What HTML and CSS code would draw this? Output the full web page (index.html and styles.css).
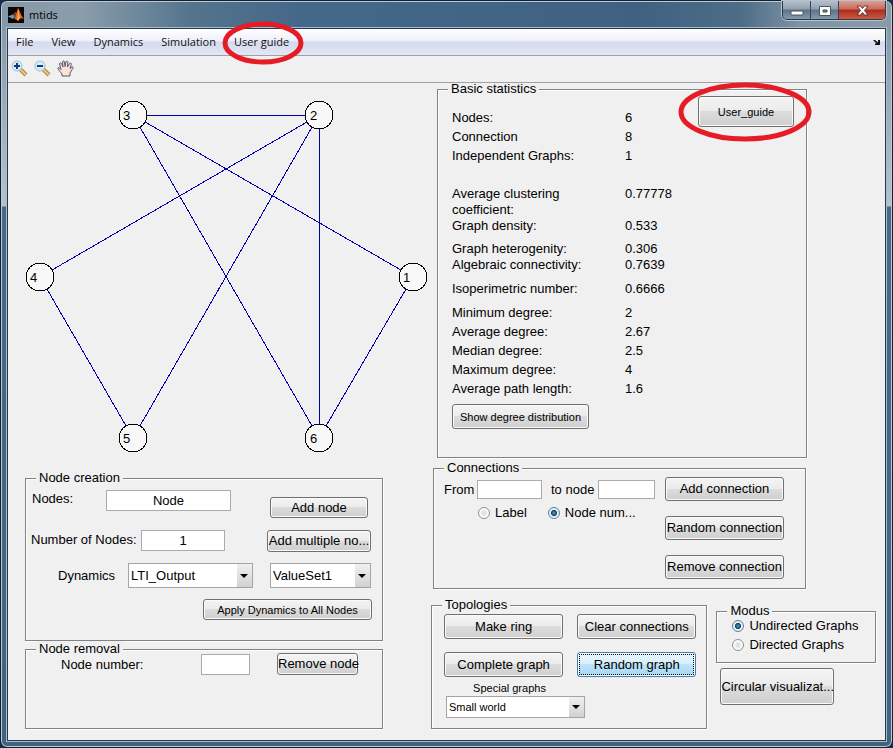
FILE: index.html
```html
<!DOCTYPE html>
<html lang="en">
<head>
<meta charset="utf-8">
<title>mtids</title>
<link rel="stylesheet" href="styles.css">
</head>
<body>
<div class="window">
  <header class="titlebar">
    <svg class="app-icon" viewBox="0 0 16 16" aria-hidden="true">
      <rect width="16" height="16" fill="#0b0806"/>
      <path d="M0 9.500l4.500-2L7 9l-2 3z" fill="#5b9cc4"/>
      <path d="M4.500 7.500L8 4.500l1 2.500-2 4-2 1 2-3z" fill="#8a3a20"/>
      <path d="M10 1c1.500 2 2.500 7 6 11-3-1.500-4-1-6 2-1-1-2-2-3.500-2C8 9 9 4 10 1z" fill="#e8642a"/>
      <path d="M10 1c1 3 1 7 2 9.500L10 14l-1-2c1-3 1-7 1-11z" fill="#f7b04c"/>
    </svg>
    <h1 class="app-title">mtids</h1>
    <div class="window-controls">
      <button class="wc wc-min" aria-label="Minimize"><svg viewBox="0 0 27 17"><rect x="8" y="9" width="12" height="4" rx="1" fill="#fff" stroke="#4a5560"/></svg></button>
      <button class="wc wc-max" aria-label="Maximize"><svg viewBox="0 0 27 17"><path d="M8.500 4.500h11v9h-11zM12 8v2h4V8z" fill="#fff" fill-rule="evenodd" stroke="#4a5560"/></svg></button>
      <button class="wc wc-close" aria-label="Close"><svg viewBox="0 0 46 17"><path d="M18 4h3.500l2 2.500L25.500 4H29l-3.500 4.500L29 13h-3.500l-2-2.500-2 2.500H18l3.500-4.500z" fill="#fff" stroke="#5a3a3a"/></svg></button>
    </div>
  </header>

  <div class="client">
    <nav class="menubar">
      <a href="#file">File</a>
      <a href="#view">View</a>
      <a href="#dynamics">Dynamics</a>
      <a href="#simulation">Simulation</a>
      <a href="#guide" class="marked">User guide
        <svg class="ring ring-menu" viewBox="0 0 82 44" aria-hidden="true"><ellipse cx="41" cy="22" rx="38" ry="19"/></svg>
      </a>
      <svg class="dock" viewBox="0 0 8 7" aria-hidden="true"><path d="M0 1h2l3 2.500V1h2v5H2V4.500h1.500L1 2z" fill="#111"/></svg>
    </nav>

    <div class="toolbar">
      <button class="tool" aria-label="Zoom in"><svg viewBox="0 0 17 17">
        <path d="M9 9l6 6" stroke="#a98446" stroke-width="4"/><path d="M9 9l6 6" stroke="#ecc878" stroke-width="2"/>
        <circle cx="6" cy="6" r="5" fill="#d5eefa" stroke="#9bbcd8"/><path d="M3 6h6M6 3v6" stroke="#143a7c" stroke-width="2"/></svg></button>
      <button class="tool" aria-label="Zoom out"><svg viewBox="0 0 17 17">
        <path d="M9 9l6 6" stroke="#a98446" stroke-width="4"/><path d="M9 9l6 6" stroke="#ecc878" stroke-width="2"/>
        <circle cx="6" cy="6" r="5" fill="#d5eefa" stroke="#9bbcd8"/><path d="M3 6h6" stroke="#143a7c" stroke-width="2"/></svg></button>
      <button class="tool" aria-label="Pan"><svg viewBox="0 0 17 17">
        <path d="M5 16v-2L1 9c-.6-1 .6-2 1.600-1L4 9.500 2.500 4c0-1.300 1.500-1.500 2-.3L6 7 5.500 2c.2-1.300 1.800-1.300 2 0L8 6.500 9 1.800c.4-1.100 1.900-.9 1.900.4L10.500 7 12.500 3.500c.7-1 2-.4 1.800.8L13 8.500 15 7c1-.5 1.500.4 1 1.200L13 13v3z" fill="#fbe3cf" stroke="#55557c" stroke-width="1"/></svg></button>
    </div>

    <main class="workspace">
      <section class="left">
        <svg class="graph" viewBox="0 0 423 387" role="img" aria-label="Graph">
          <g class="edges">
            <path d="M125 32L405 194M125 32L311 355M311 32L32 194M311 32L125 355M32 194L125 355M405 194L311 355"/>
            <rect x="125" y="32" width="186" height="1"/>
            <rect x="311" y="32" width="1" height="323"/>
          </g>
          <g class="nodes">
            <circle cx="405" cy="194" r="14"/><text x="395" y="199">1</text>
            <circle cx="311" cy="32" r="14"/><text x="302" y="37">2</text>
            <circle cx="125" cy="32" r="14"/><text x="115" y="37">3</text>
            <circle cx="32" cy="194" r="14"/><text x="22" y="199">4</text>
            <circle cx="125" cy="355" r="14"/><text x="115" y="360">5</text>
            <circle cx="311" cy="355" r="14"/><text x="302" y="360">6</text>
          </g>
        </svg>

        <fieldset class="panel creation">
          <legend>Node creation</legend>
          <div class="row row-first">
            <label for="nodes">Nodes:</label>
            <input id="nodes" class="w-name" type="text" value="Node">
            <button class="btn">Add node</button>
          </div>
          <div class="row row-count">
            <label for="count">Number of Nodes:</label>
            <input id="count" class="w-count" type="text" value="1">
            <button class="btn">Add multiple no...</button>
          </div>
          <div class="row row-dynamics">
            <label for="dyn">Dynamics</label>
            <span class="drop w-name"><select id="dyn"><option>LTI_Output</option></select></span>
            <span class="drop w-set"><select aria-label="Value set"><option>ValueSet1</option></select></span>
          </div>
          <div class="row row-apply"><button class="btn small">Apply Dynamics to All Nodes</button></div>
        </fieldset>

        <fieldset class="panel removal">
          <legend>Node removal</legend>
          <div class="row row-removal">
            <label for="rem">Node number:</label>
            <input id="rem" type="text">
            <button class="btn">Remove node</button>
          </div>
        </fieldset>
      </section>

      <section class="right">
        <fieldset class="panel stats">
          <legend>Basic statistics</legend>
          <div class="stats-body">
            <dl>
              <div><dt>Nodes:</dt><dd>6</dd></div>
              <div><dt>Connection</dt><dd>8</dd></div>
              <div class="gap-l"><dt>Independent Graphs:</dt><dd>1</dd></div>
              <div class="gap-none"><dt>Average clustering coefficient:</dt><dd>0.77778</dd></div>
              <div class="gap-s"><dt>Graph density:</dt><dd>0.533</dd></div>
              <div class="gap-none"><dt>Graph heterogenity:</dt><dd>0.306</dd></div>
              <div class="gap-m"><dt>Algebraic connectivity:</dt><dd>0.7639</dd></div>
              <div class="gap-m"><dt>Isoperimetric number:</dt><dd>0.6666</dd></div>
              <div><dt>Minimum degree:</dt><dd>2</dd></div>
              <div><dt>Average degree:</dt><dd>2.67</dd></div>
              <div><dt>Median degree:</dt><dd>2.5</dd></div>
              <div><dt>Maximum degree:</dt><dd>4</dd></div>
              <div><dt>Average path length:</dt><dd>1.6</dd></div>
            </dl>
            <div class="marked guide">
              <button class="btn small">User_guide</button>
              <svg class="ring ring-guide" viewBox="0 0 134 60" aria-hidden="true"><ellipse cx="67" cy="30" rx="64" ry="27"/></svg>
            </div>
          </div>
          <button class="btn small distribution">Show degree distribution</button>
        </fieldset>

        <fieldset class="panel connections">
          <legend>Connections</legend>
          <div class="conn-body">
            <div class="conn-form">
              <div class="conn-line">
                <label for="from">From</label><input id="from" class="w-from" type="text">
                <label for="to" class="to">to node</label><input id="to" class="w-to" type="text">
              </div>
              <div class="conn-kind">
                <label><input type="radio" name="kind">Label</label>
                <label><input type="radio" name="kind" checked>Node num...</label>
              </div>
            </div>
            <div class="conn-actions">
              <button class="btn">Add connection</button>
              <button class="btn">Random connection</button>
              <button class="btn">Remove connection</button>
            </div>
          </div>
        </fieldset>

        <div class="bottom">
          <fieldset class="panel topologies">
            <legend>Topologies</legend>
            <div class="topo-grid">
              <button class="btn">Make ring</button>
              <button class="btn">Clear connections</button>
              <button class="btn">Complete graph</button>
              <button class="btn focused">Random graph</button>
            </div>
            <div class="special small">
              <label for="special">Special graphs</label>
              <span class="drop"><select id="special"><option>Small world</option></select></span>
            </div>
          </fieldset>
          <div class="side">
            <fieldset class="panel modus">
              <legend>Modus</legend>
              <label><input type="radio" name="modus" checked>Undirected Graphs</label>
              <label><input type="radio" name="modus">Directed Graphs</label>
            </fieldset>
            <button class="btn circular">Circular visualizat...</button>
          </div>
        </div>
      </section>
    </main>
  </div>
</div>
</body>
</html>
```

FILE: styles.css
```css
* { box-sizing: border-box; }

body {
  margin: 0;
  background: #17304d;
  color: #000;
  font: 13px/16px "Liberation Sans", Arial, sans-serif;
}

button, input, select { font: inherit; color: inherit; margin: 0; }

/* Window frame */
.window {
  display: flex;
  flex-direction: column;
  min-height: 100vh;
  padding: 0 6px 6px;
  border: 1px solid #14202e;
  border-radius: 7px;
  background:
    linear-gradient(90deg, #8799a8 0, #8a9dab 80px, #54748d 190px, #44688a 300px, #3f6282 640px, #4d6d87 740px, #7f93a3 800px, #8a9ba8 100%) top / 100% 28px no-repeat,
    linear-gradient(#8194a6 0, #b4c2cf 205px, #46698a 206px, #42637f 100%);
  box-shadow: inset 0 0 0 1px #b9cbd8;
}

.titlebar { display: flex; height: 27px; padding-left: 1px; }
.app-icon { width: 16px; height: 16px; margin: 6px 0 0; }
.app-title { flex: 1; margin: 5px 0 0 5px; font: 11px/18px "Open Sans", "Noto Sans", sans-serif; }

.window-controls {
  display: flex;
  height: 19px;
  border: 1px solid #2b3a48;
  border-top: 0;
  border-radius: 0 0 5px 5px;
  box-shadow: 0 0 0 1px #b4c3cf;
  overflow: hidden;
}
.wc { height: 100%; padding: 0; border: 0; border-right: 1px solid #35465a; background: linear-gradient(#b5bfca 0, #8f9eae 45%, #5f7388 50%, #8499ac 100%); }
.wc svg { display: block; height: 17px; }
.wc-min, .wc-max { width: 28px; }
.wc-close { width: 46px; border-right: 0; background: linear-gradient(#dba093 0, #c7695a 45%, #ab2b1d 50%, #cc5a42 100%); }

.client {
  display: flex;
  flex: 1;
  flex-direction: column;
  border: 1px solid #26384b;
  background: #f0f0f0;
  box-shadow: 0 0 0 1px #a9bccb;
}

/* Menu and tools */
.menubar {
  display: flex;
  align-items: center;
  height: 27px;
  padding: 0 4px 0 8px;
  gap: 18px;
  border-bottom: 1px solid #a0a0a0;
  background: linear-gradient(#fff 0, #eef0f9 45%, #d5daed 50%, #e2e6f5 100%);
  font: 11px/16px "Open Sans", "Noto Sans", sans-serif;
}
.menubar a { color: #111; text-decoration: none; white-space: nowrap; }
.dock { width: 8px; height: 7px; margin-left: auto; }

.toolbar {
  position: relative;
  z-index: 1;
  display: flex;
  gap: 6px;
  height: 27px;
  padding: 4px 3px;
  border-bottom: 1px solid #a0a0a0;
  background: #f0f0f0;
}
.tool { width: 17px; height: 17px; padding: 0; border: 0; background: none; }
.tool svg { display: block; width: 17px; height: 17px; }

/* Red marker rings lie over the marked control */
.marked { position: relative; }
.ring { position: absolute; z-index: 2; fill: none; stroke: #e51c25; stroke-width: 5; pointer-events: none; }
.ring-menu { width: 82px; height: 44px; left: -12px; top: -13px; }
.ring-guide { width: 134px; height: 60px; left: -20px; top: -14px; }

/* Workspace: starts under the toolbar, which cuts the first panel title */
.workspace { display: grid; grid-template-columns: minmax(0, 423fr) minmax(0, 454fr); flex: 1; }
.graph { display: block; width: 100%; height: 387px; }
.edges path { fill: none; stroke: #0000a8; stroke-width: 1; shape-rendering: crispEdges; }
.edges rect { fill: #0000a8; }
.nodes circle { fill: #f8f8f8; stroke: #000; shape-rendering: crispEdges; }

.panel {
  min-width: 0;
  margin: 0;
  padding: 0;
  border: 1px solid #828282;
  box-shadow: inset 1px 1px #fff, 1px 1px #fff;
}
.panel legend { margin-left: 10px; padding: 0 3px; background: #f0f0f0; }

.small { font-size: 11px; }

.btn {
  padding: 0;
  border: 1px solid #707070;
  border-radius: 3px;
  background: linear-gradient(#f4f4f4 0, #ebebeb 49%, #dcdcdc 50%, #cfcfcf 100%);
  box-shadow: inset 0 0 0 1px #fafafa;
  white-space: nowrap;
}
.btn.focused {
  border-color: #3c7fb1;
  background: linear-gradient(#e9f5fc 0, #d8effb 49%, #bce4fb 50%, #a5d7f3 100%);
  outline: 1px dotted #000;
  outline-offset: -3px;
}

input[type="text"] { min-width: 0; height: 21px; padding: 0; border: 1px solid #ababab; background: #fff; text-align: center; }

.drop { position: relative; display: block; }
.drop select { display: block; width: 100%; height: 100%; padding: 0 16px 0 2px; appearance: none; border: 1px solid #a4a4a4; border-radius: 0; background: #fff; }
.drop::before { content: ""; position: absolute; top: 1px; right: 1px; bottom: 1px; width: 15px; background: linear-gradient(#f0f0f0, #d2d2d2); pointer-events: none; }
.drop::after { content: ""; position: absolute; top: 50%; right: 5px; margin-top: -2px; border: 4px solid transparent; border-top-color: #000; border-bottom: 0; pointer-events: none; }

input[type="radio"] {
  width: 12px;
  height: 12px;
  margin: 0 5px 0 0;
  appearance: none;
  border: 1px solid #8e8f8f;
  border-radius: 50%;
  background: radial-gradient(circle, #e2e2e2 0 25%, #fdfdfd 60%);
}
input[type="radio"]:checked { border-color: #5e7f98; background: radial-gradient(circle at 50% 50%, #4fa6cd 0, #12405f 38%, #e6f1f7 48%); }

/* Left panels */
.creation, .removal { margin: 0 48px 0 17px; }
.row { display: flex; }
.creation { height: 171px; }
.creation .row { margin-bottom: 11px; }
.row label { white-space: nowrap; }
.row .btn { margin-left: auto; }
.w-name { width: 125px; }
.w-count { width: 84px; }
.w-set { width: 101px; margin-left: auto; }

.row-first { height: 28px; margin-top: 4px; padding: 0 14px 0 6px; }
.row-first label { width: 74px; padding-top: 1px; }
.row-first .btn { width: 98px; height: 21px; align-self: flex-end; }
.row-count { height: 22px; margin-top: 12px; padding: 0 11px 0 5px; }
.row-count label { width: 110px; padding-top: 2px; }
.row-count .btn { width: 104px; }
.row-dynamics { height: 25px; align-items: center; padding: 0 11px 0 32px; }
.row-dynamics label { width: 70px; }
.row-dynamics .drop { height: 25px; }
.row-apply { height: 21px; padding-right: 10px; }
.row-apply .btn { width: 169px; }

.removal { height: 88px; }
.row-removal { height: 22px; margin-top: -4px; padding: 0 24px 0 35px; }
.row-removal label { width: 140px; padding-top: 4px; }
.row-removal input { width: 49px; align-self: flex-end; }
.row-removal .btn { width: 81px; height: 22px; }

/* Statistics */
.stats { height: 377px; margin: -2px 78px 0 6px; }
.stats-body { display: flex; padding: 13px 12px 0 14px; }
dl { flex: 1; margin: 0; }
dl div { display: grid; grid-template-columns: 133px 1fr; column-gap: 40px; margin-bottom: 3px; }
dl .gap-none { margin-bottom: 0; }
dl .gap-s { margin-bottom: 7px; }
dl .gap-m { margin-bottom: 8px; }
dl .gap-l { margin-bottom: 22px; }
dd { margin: 0; }
.guide { width: 96px; height: 31px; margin: -14px 0 0 -96px; }
.guide .btn { width: 100%; height: 100%; }
.distribution { width: 137px; height: 25px; margin: 4px 0 0 14px; }

/* Connections */
.connections { height: 129px; margin: 2px 79px 0 2px; }
.conn-body { display: flex; justify-content: space-between; padding: 1px 21px 0 10px; }
.conn-line { display: flex; align-items: center; height: 25px; }
.conn-line input { height: 19px; }
.conn-line label { width: 33px; }
.conn-line .to { width: 47px; margin-left: 9px; }
.w-from { width: 65px; }
.w-to { width: 57px; }
.conn-kind { display: flex; gap: 21px; margin: 3px 0 0 34px; white-space: nowrap; }
.conn-kind label, .modus label { display: flex; align-items: center; }
.conn-actions { display: flex; flex-direction: column; gap: 15px; width: 119px; }
.conn-actions .btn { height: 24px; }

/* Topologies and mode */
.bottom { display: flex; gap: 9px; margin-top: 8px; padding-right: 9px; }
.topologies { flex: 275; height: 132px; }
.topo-grid { display: grid; grid-template-columns: 1fr 1fr; gap: 13px 14px; padding: 1px 10px 0 12px; }
.topo-grid .btn { height: 25px; }
.special { width: 139px; margin: 3px 0 0 14px; text-align: center; }
.special label { display: block; padding-right: 12px; }
.special .drop { height: 22px; }
.side { flex: 160; padding-top: 6px; min-width: 0; }
.modus { height: 60px; }
.modus label { height: 19px; padding-left: 15px; white-space: nowrap; }
.modus legend + label { margin-top: -3px; }
.circular { width: 114px; height: 37px; margin: 5px 0 0 4px; }
```
